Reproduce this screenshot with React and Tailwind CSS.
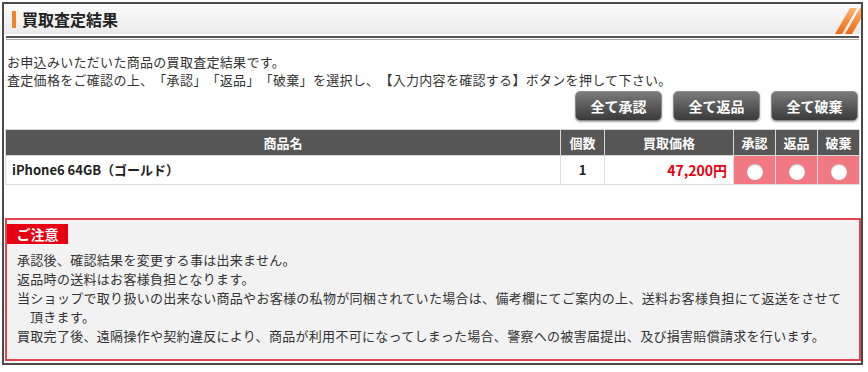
import React from 'react';

const notes = [
  { text: '承認後、確認結果を変更する事は出来ません。' },
  { text: '返品時の送料はお客様負担となります。' },
  { text: '当ショップで取り扱いの出来ない商品やお客様の私物が同梱されていた場合は、備考欄にてご案内の上、送料お客様負担にて返送をさせて' },
  { text: '頂きます。', indent: true },
  { text: '買取完了後、遠隔操作や契約違反により、商品が利用不可になってしまった場合、警察への被害届提出、及び損害賠償請求を行います。' },
];

const Stripes = () => (
  <svg width="28" height="28" viewBox="0 0 28 28" className="absolute right-0 bottom-0">
    <defs>
      <linearGradient id="og" x1="0" y1="0" x2="0" y2="1">
        <stop offset="0" stopColor="#fbb36e" />
        <stop offset="1" stopColor="#ec6a10" />
      </linearGradient>
    </defs>
    <path d="M2 28 L9 28 L24 2 L17 2 Z" fill="url(#og)" />
    <path d="M12 28 L19 28 L34 2 L27 2 Z" fill="url(#og)" />
  </svg>
);

const Radio = () => (
  <span className="inline-block w-[16px] h-[16px] rounded-full bg-white shadow-[inset_0_1px_1px_rgba(0,0,0,0.25)] align-middle" />
);

const BulkButton = ({ label }) => (
  <button className="w-[87px] h-[30px] rounded-[5px] border border-[#8c8c8c] bg-gradient-to-b from-[#7b7b7b] to-[#3b3b3b] text-white text-[14px] font-bold shadow-[0_1px_2px_rgba(0,0,0,0.35)]">
    {label}
  </button>
);

export default function App() {
  return (
    <div
      className="w-[868px] h-[372px] bg-white pt-[2px] pl-[2px] text-[#333] [text-spacing-trim:space-all]"
      style={{ fontFamily: '"Noto Sans CJK JP", "Noto Sans", sans-serif' }}
    >
      <div className="w-[861px] h-[363px] border-2 border-[#4a4a4a] flex flex-col">
        {/* Header */}
        <div className="relative h-[30px] bg-gradient-to-b from-[#fbfbfb] to-[#ebebeb] flex items-center">
          <span className="ml-[8px] w-[4px] h-[17px] bg-[#f08526]" />
          <h1 className="ml-[6px] text-[16px] font-bold text-[#222] leading-none">買取査定結果</h1>
          <Stripes />
        </div>
        <div className="mx-[2px] mt-[2px] h-[2px] bg-[#555]" />
        <div className="mx-[2px] mt-[1px] h-[1px] bg-[#aaa]" />

        {/* Intro */}
        <div className="pl-[3px] pt-[13px] text-[13px] leading-[18px] tracking-[0.3px]">
          <p>お申込みいただいた商品の買取査定結果です。</p>
          <p>査定価格をご確認の上、「承認」「返品」「破棄」を選択し、【入力内容を確認する】ボタンを押して下さい。</p>
        </div>

        {/* Bulk buttons */}
        <div className="mt-[2px] pr-[3px] flex justify-end gap-[11px]">
          <BulkButton label="全て承認" />
          <BulkButton label="全て返品" />
          <BulkButton label="全て破棄" />
        </div>

        {/* Result table */}
        <table className="mt-[8px] ml-[1px] w-[854px] border-collapse table-fixed text-[13px]">
          <colgroup>
            <col className="w-[555px]" />
            <col className="w-[44px]" />
            <col className="w-[129px]" />
            <col className="w-[42px]" />
            <col className="w-[42px]" />
            <col className="w-[42px]" />
          </colgroup>
          <thead>
            <tr className="h-[26px] bg-[#565656] text-white font-bold">
              <th className="border border-[#d6d6d6]">商品名</th>
              <th className="border border-[#d6d6d6]">個数</th>
              <th className="border border-[#d6d6d6]">買取価格</th>
              <th className="border border-[#d6d6d6]">承認</th>
              <th className="border border-[#d6d6d6]">返品</th>
              <th className="border border-[#d6d6d6]">破棄</th>
            </tr>
          </thead>
          <tbody>
            <tr className="h-[29px] font-bold">
              <td className="border border-[#dcdcdc] pl-[6px] text-[#222]">iPhone6 64GB（ゴールド）</td>
              <td className="border border-[#dcdcdc] text-center text-[#222]">1</td>
              <td className="border border-[#dcdcdc] text-right pr-[6px] text-[14px] text-[#e60012]">47,200円</td>
              <td className="border border-[#dcdcdc] bg-[#f27882] text-center"><Radio /></td>
              <td className="border border-[#dcdcdc] bg-[#f27882] text-center"><Radio /></td>
              <td className="border border-[#dcdcdc] bg-[#f27882] text-center"><Radio /></td>
            </tr>
          </tbody>
        </table>

        {/* Notice */}
        <div className="mt-[33px] ml-[1px] w-[856px] h-[143px] border-2 border-[#e5434e] bg-[#f2f2f2]">
          <div className="mt-[4px] w-[61px] h-[20px] bg-[#e60012] text-white text-[14px] font-bold flex items-center justify-center leading-none">
            ご注意
          </div>
          <div className="mt-[6px] pl-[10px] text-[13px] leading-[19px] tracking-[0.3px]">
            {notes.map((n, i) => (
              <p key={i} className={n.indent ? 'pl-[13px]' : ''}>{n.text}</p>
            ))}
          </div>
        </div>
      </div>
    </div>
  );
}
